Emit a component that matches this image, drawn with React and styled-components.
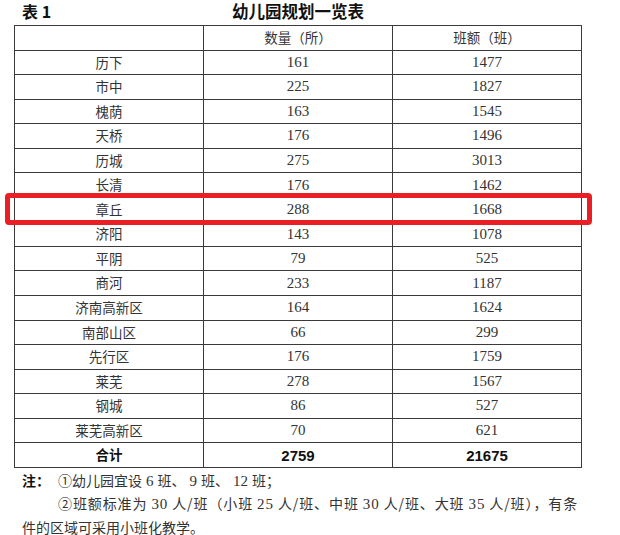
import React from "react";
import styled, { createGlobalStyle } from "styled-components";

const ROW_H = 24.55;
const HIGHLIGHT_INDEX = 6;

const rows = [
  ["历下", 161, 1477],
  ["市中", 225, 1827],
  ["槐荫", 163, 1545],
  ["天桥", 176, 1496],
  ["历城", 275, 3013],
  ["长清", 176, 1462],
  ["章丘", 288, 1668],
  ["济阳", 143, 1078],
  ["平阴", 79, 525],
  ["商河", 233, 1187],
  ["济南高新区", 164, 1624],
  ["南部山区", 66, 299],
  ["先行区", 176, 1759],
  ["莱芜", 278, 1567],
  ["钢城", 86, 527],
  ["莱芜高新区", 70, 621],
];

const GlobalStyle = createGlobalStyle`
  body {
    margin: 0;
    background: #ffffff;
    color: #2a2a2a;
    font-family: "Liberation Serif", "Noto Sans CJK SC", serif;
  }
`;

const Page = styled.div`
  width: 620px;
  height: 535px;
  overflow: hidden;
  padding-left: 14px;
  box-sizing: border-box;
`;

const Caption = styled.div`
  width: 568px;
  height: 25px;
  display: grid;
  grid-template-columns: 1fr auto 1fr;
  align-items: center;
  font-family: "Noto Sans CJK SC", sans-serif;
  font-weight: 700;
  color: #111;
`;

const CaptionLabel = styled.span`
  padding-left: 8px;
  font-size: 16px;
  line-height: 20px;
  margin-top: -4px;
`;

const CaptionTitle = styled.span`
  font-size: 16.5px;
  line-height: 20px;
  margin-top: -4px;
`;

const TableWrap = styled.div`
  position: relative;
  width: 568px;
`;

const Table = styled.table`
  width: 568px;
  border-collapse: collapse;
  table-layout: fixed;
`;

const Cell = styled.td`
  height: ${ROW_H - 1}px;
  padding: 0;
  border: 1px solid #3a3a3a;
  text-align: center;
  vertical-align: middle;
  line-height: 1;
  color: ${(p) => (p.$bold ? "#111" : "#333")};
  font-family: ${(p) =>
    p.$han
      ? '"Noto Sans CJK SC", sans-serif'
      : p.$bold
      ? '"Liberation Sans", "Noto Sans CJK SC", sans-serif'
      : '"Liberation Serif", serif'};
  font-size: ${(p) => (p.$han ? "13.5px" : "15px")};
  font-weight: ${(p) => (p.$bold ? 700 : 400)};
`;

const Highlight = styled.div`
  position: absolute;
  left: -9px;
  right: -10px;
  border: 5px solid #ea1f25;
  border-radius: 4px;
  pointer-events: none;
`;

const Notes = styled.div`
  width: 590px;
  margin-left: 8px;
  margin-top: 1px;
  font-family: "Noto Sans CJK SC", sans-serif;
  font-size: 14px;
  color: #333;
`;

const NoteLine = styled.div`
  height: 23.5px;
  line-height: 23.5px;
  white-space: nowrap;
  display: flex;
  padding-left: ${(p) => p.$indent || 0}px;
  letter-spacing: ${(p) => p.$spacing || 0}px;
`;

const NoteMark = styled.span`
  width: 36px;
  font-weight: 700;
  color: #111;
`;

const Num = styled.span`
  font-family: "Liberation Serif", serif;
  font-size: 15px;
  padding: 0 4px;
`;

const App = () => (
  <>
    <GlobalStyle />
    <Page>
      <Caption>
        <CaptionLabel>表 1</CaptionLabel>
        <CaptionTitle>幼儿园规划一览表</CaptionTitle>
        <span />
      </Caption>
      <TableWrap>
        <Table>
          <tbody>
            <tr>
              <Cell $han />
              <Cell $han>数量（所）</Cell>
              <Cell $han>班额（班）</Cell>
            </tr>
            {rows.map(([name, count, classes]) => (
              <tr key={name}>
                <Cell $han>{name}</Cell>
                <Cell>{count}</Cell>
                <Cell>{classes}</Cell>
              </tr>
            ))}
            <tr>
              <Cell $han $bold>
                合计
              </Cell>
              <Cell $bold>2759</Cell>
              <Cell $bold>21675</Cell>
            </tr>
          </tbody>
        </Table>
        <Highlight
          style={{
            top: ROW_H * (HIGHLIGHT_INDEX + 1) - 4,
            height: ROW_H + 8 - 10,
          }}
        />
      </TableWrap>
      <Notes>
        <NoteLine>
          <NoteMark>注：</NoteMark>
          <span>
            ①幼儿园宜设<Num>6</Num>班、<Num>9</Num>班、<Num>12</Num>班；
          </span>
        </NoteLine>
        <NoteLine $indent={36} $spacing={0.9}>
          <span>
            ②班额标准为<Num>30</Num>人/班（小班<Num>25</Num>人/班、中班
            <Num>30</Num>人/班、大班<Num>35</Num>人/班），有条
          </span>
        </NoteLine>
        <NoteLine>
          <span>件的区域可采用小班化教学。</span>
        </NoteLine>
      </Notes>
    </Page>
  </>
);

export default App;
